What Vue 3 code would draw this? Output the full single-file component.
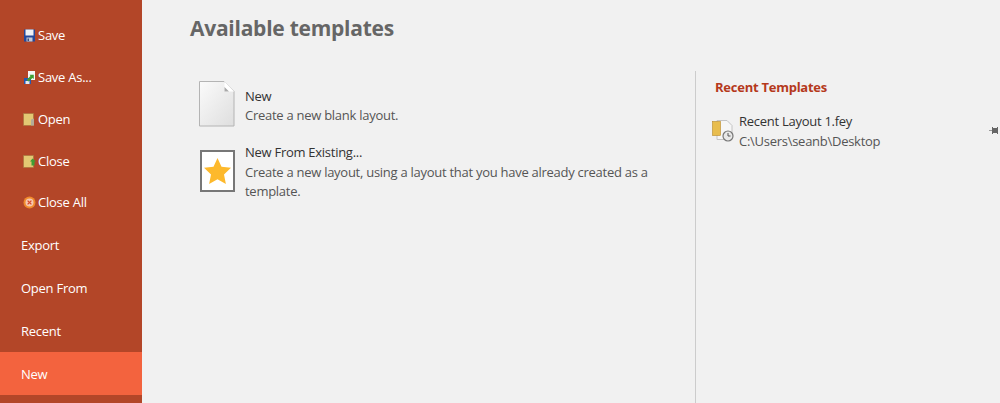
<template>
  <div class="page">
    <nav class="sidebar">
      <div class="file-group">
        <a v-for="item in fileItems" :key="item.label" class="side-item file-item">
          <svg class="side-icon" width="13" height="13" viewBox="0 0 13 13">
            <template v-if="item.icon === 'save'">
              <rect x="1" y="0.500" width="11" height="12" fill="#25489a" />
              <rect x="2.500" y="0.500" width="8" height="6" fill="#eef1f6" />
              <rect x="3.500" y="8.500" width="6" height="4" fill="#c4cad6" />
              <rect x="4.500" y="9.500" width="1.500" height="2.500" fill="#3b4f80" />
            </template>
            <template v-else-if="item.icon === 'saveas'">
              <path d="M5 0h7v9H5z" fill="#f5f6f8" />
              <rect x="1" y="7" width="7" height="6" fill="#2459b3" />
              <rect x="2.500" y="10" width="4" height="3" fill="#e5e8ee" />
              <path d="M3.500 9l4-4-1-1.200h4.300v4.300L9.500 7l-4 3.500z" fill="#3f9e35" />
            </template>
            <template v-else-if="item.icon === 'open'">
              <rect x="0.500" y="0.500" width="10" height="12" fill="#e3c873" stroke="#a8763e" stroke-width=".7" />
              <path d="M8 12.500V6.500l3-1v7z" fill="#b3ac98" />
            </template>
            <template v-else-if="item.icon === 'close'">
              <rect x="0.500" y="0.500" width="10" height="12" fill="#e3c873" stroke="#a8763e" stroke-width=".7" />
              <path d="M9.500 3.500l3.500 3h-1.500v4h-3v-4H7z" fill="#3f9e35" />
            </template>
            <template v-else>
              <circle cx="6.500" cy="6.500" r="6" fill="#f08a2c" />
              <circle cx="6.500" cy="6.500" r="4" fill="#f6c8b0" />
              <path d="M4.600 4.600l3.800 3.800M8.400 4.600L4.600 8.400" stroke="#d9482b" stroke-width="1.300" />
            </template>
          </svg>
          <span>{{ item.label }}</span>
        </a>
      </div>
      <a
        v-for="item in navItems"
        :key="item"
        class="side-item nav-item"
        :class="{ active: item === 'New' }"
      >{{ item }}</a>
    </nav>

    <main class="content">
      <h1 class="title">Available templates</h1>
      <div class="columns">
        <section class="templates">
          <div class="template">
            <svg class="template-icon" width="36" height="46" viewBox="0 0 36 46">
              <defs>
                <linearGradient id="sheet" x1="0" y1="0" x2="1" y2="1">
                  <stop offset="0" stop-color="#fbfbfb" />
                  <stop offset="1" stop-color="#dedede" />
                </linearGradient>
              </defs>
              <path d="M.5.500h24.500l10 10v34.500H.5z" fill="url(#sheet)" stroke="#b4b4b4" />
              <path d="M25.500.500l9.500 10h-9.500z" fill="#fff" />
              <path d="M25.500 6l4.500 4.500h-4.500z" fill="#a9a9a9" />
            </svg>
            <div class="template-text">
              <div class="name">New</div>
              <div class="desc">Create a new blank layout.</div>
            </div>
          </div>
          <div class="template">
            <svg class="template-icon star-icon" width="37" height="42" viewBox="0 0 37 42">
              <rect x="2" y="1" width="33" height="40" fill="#fff" stroke="#777" stroke-width="2" />
              <path d="M18.500 8l4 8.700 9.500 1.100-7 6.600 1.900 9.600-8.400-4.700-8.400 4.700 1.900-9.600-7-6.600 9.500-1.100z" fill="#fdb92c" />
            </svg>
            <div class="template-text">
              <div class="name">New From Existing...</div>
              <div class="desc">Create a new layout, using a layout that you have already created as a template.</div>
            </div>
          </div>
        </section>

        <aside class="recent">
          <h2 class="recent-title">Recent Templates</h2>
          <div class="recent-row">
            <svg width="24" height="24" viewBox="0 0 24 24">
              <path d="M6 1.500h10l5 5v14H6z" fill="#f6f6f6" stroke="#c4c4c4" />
              <rect x="1.500" y="2.500" width="8" height="14" fill="#e8bd4e" stroke="#b98a2a" stroke-width=".6" />
              <circle cx="17" cy="17" r="5" fill="#e8e8e8" stroke="#777" stroke-width="1.200" />
              <path d="M17 14v3h2.500" fill="none" stroke="#555" />
            </svg>
            <div>
              <div class="name">Recent Layout 1.fey</div>
              <div class="desc">C:\Users\seanb\Desktop</div>
            </div>
            <svg class="pin" width="9" height="7" viewBox="0 0 9 7">
              <path d="M0 3h3v1H0z" fill="#999" />
              <path d="M3 0h1v1h4V0h1v7H8V6H4v1H3z" fill="#666" />
            </svg>
          </div>
        </aside>
      </div>
    </main>
  </div>
</template>

<script setup>
const fileItems = [
  { label: 'Save', icon: 'save' },
  { label: 'Save As...', icon: 'saveas' },
  { label: 'Open', icon: 'open' },
  { label: 'Close', icon: 'close' },
  { label: 'Close All', icon: 'closeall' },
]

const navItems = ['Export', 'Open From', 'Recent', 'New']
</script>

<style>
html, body {
  margin: 0;
  overflow: hidden;
}
</style>

<style scoped>
.page {
  display: flex;
  width: 1000px;
  height: 403px;
  overflow: hidden;
  background: #f1f1f1;
  font-family: "Open Sans", "Noto Sans", sans-serif;
  color: #444;
}

.sidebar {
  width: 142px;
  flex-shrink: 0;
  padding-top: 14px;
  box-sizing: border-box;
  background: #b34628;
  color: #fff;
  font-size: 13px;
}

.file-group {
  height: 209px;
}

.side-item {
  display: flex;
  align-items: center;
  letter-spacing: -0.25px;
}

.file-item {
  height: 42px;
  padding-left: 23px;
}

.file-item:last-child {
  height: 40px;
}

.side-icon {
  margin-right: 2px;
  flex-shrink: 0;
}

.nav-item {
  height: 43px;
  box-sizing: border-box;
  padding: 1px 0 0 21px;
}

.active {
  background: #f3633e;
}

.content {
  flex: 1;
  padding: 14px 0 0 48px;
  display: flex;
  flex-direction: column;
  min-width: 0;
}

.title {
  margin: 0;
  font-size: 21px;
  font-weight: 700;
  line-height: 29px;
  color: #666;
  letter-spacing: -0.25px;
}

.columns {
  flex: 1;
  display: flex;
  margin-top: 28px;
}

.templates {
  width: 505px;
  flex-shrink: 0;
  padding: 10px 0 0 9px;
  box-sizing: border-box;
  display: flex;
  flex-direction: column;
  gap: 12px;
}

.template {
  display: flex;
  align-items: center;
  gap: 9px;
  font-size: 13px;
  line-height: 19.500px;
}

.template-icon {
  flex-shrink: 0;
  width: 37px;
}

.template:first-child .template-icon {
  width: 36px;
  margin-right: 1px;
}

.star-icon {
  margin-top: 1px;
}

.template-text {
  padding-top: 4px;
}

.name {
  color: #333;
  letter-spacing: -0.27px;
}

.desc {
  color: #555;
  letter-spacing: -0.27px;
}

.recent {
  flex: 1;
  border-left: 1px solid #ccc;
  padding: 6px 0 0 19px;
}

.recent-title {
  margin: 0 0 14px;
  font-size: 13px;
  font-weight: 700;
  line-height: 20px;
  color: #b5391c;
  letter-spacing: -0.25px;
}

.recent-row {
  position: relative;
  display: flex;
  gap: 4px;
  font-size: 13px;
  line-height: 20px;
  margin-left: -4px;
  align-items: center;
}

.pin {
  position: absolute;
  right: 2px;
  top: 16px;
}
</style>
